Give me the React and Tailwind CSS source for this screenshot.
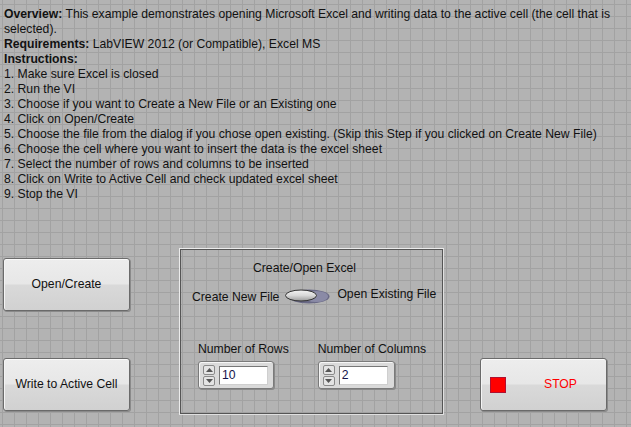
import React from "react";

const font = { fontFamily: "Tahoma, 'Liberation Sans', Arial, sans-serif" };

const PanelButton = ({ children, className = "" }) => (
  <div
    className={`h-[53px] rounded-[3px] border border-[#6a6a6a] bg-[linear-gradient(to_bottom,#ededed_0%,#e7e7e7_48%,#d9d9d9_52%,#d1d1d1_100%)] shadow-[inset_0_1px_0_#fafafa,inset_1px_0_0_#f4f4f4,1px_1px_0_#8a8a8a] flex items-center justify-center text-[12.2px] text-[#111] whitespace-nowrap ${className}`}
  >
    {children}
  </div>
);

const Spinner = () => (
  <div className="flex flex-col gap-[1px]">
    <div className="w-[12px] h-[10px] rounded-[2px] border border-[#8a8a8a] bg-[#e4e4e4] flex items-center justify-center">
      <svg width="7" height="4" viewBox="0 0 7 4">
        <path d="M0 4 L3.5 0 L7 4 Z" fill="#555" />
      </svg>
    </div>
    <div className="w-[12px] h-[10px] rounded-[2px] border border-[#8a8a8a] bg-[#e4e4e4] flex items-center justify-center">
      <svg width="7" height="4" viewBox="0 0 7 4">
        <path d="M0 0 L3.5 4 L7 0 Z" fill="#555" />
      </svg>
    </div>
  </div>
);

const NumericControl = ({ value, width }) => (
  <div
    className="h-[28px] rounded-[3px] border border-[#7a7a7a] bg-[#dadada] shadow-[inset_1px_1px_0_#f6f6f6,1px_1px_0_#8a8a8a] flex items-center gap-[4px] pl-[4px]"
    style={{ width }}
  >
    <Spinner />
    <div className="w-[49px] h-[19px] bg-white border border-[#777] border-r-[#cfcfcf] border-b-[#cfcfcf] flex items-center pl-[2px] text-[12.2px] text-[#14144a]">
      {value}
    </div>
  </div>
);

const Toggle = () => (
  <svg width="46" height="16" viewBox="0 0 46 16">
    <defs>
      <linearGradient id="knob" x1="0" y1="0" x2="0" y2="1">
        <stop offset="0" stopColor="#f4f4f4" />
        <stop offset="0.5" stopColor="#d8d8d8" />
        <stop offset="1" stopColor="#9a9a9a" />
      </linearGradient>
    </defs>
    <ellipse cx="25" cy="8.5" rx="20.5" ry="7" fill="#6a6a86" />
    <ellipse cx="32" cy="8.5" rx="12" ry="5.5" fill="#8a8aa6" />
    <ellipse cx="17" cy="7.5" rx="15.5" ry="5.5" fill="url(#knob)" stroke="#333" strokeWidth="1" />
  </svg>
);

export default function App() {
  return (
    <div
      className="w-[631px] h-[427px] overflow-hidden bg-[#b3b3b3] bg-[linear-gradient(to_right,#a2a2a2_1px,transparent_1px),linear-gradient(to_bottom,#a2a2a2_1px,transparent_1px)] bg-size-[12px_12px] bg-position-[2px_4px] text-[#111]"
      style={font}
    >
      <div className="h-[248px] pl-[4px] pt-[7px] text-[12.2px] leading-[15px] whitespace-nowrap">
        <p>
          <b>Overview:</b> This example demonstrates opening Microsoft Excel and writing data to the active cell (the cell that is
        </p>
        <p>selected).</p>
        <p>
          <b>Requirements:</b> LabVIEW 2012 (or Compatible), Excel MS
        </p>
        <p>
          <b>Instructions:</b>
        </p>
        <p>1. Make sure Excel is closed</p>
        <p>2. Run the VI</p>
        <p>3. Choose if you want to Create a New File or an Existing one</p>
        <p>4. Click on Open/Create</p>
        <p>5. Choose the file from the dialog if you chose open existing. (Skip this Step if you clicked on Create New File)</p>
        <p>6. Choose the cell where you want to insert the data is the excel sheet</p>
        <p>7. Select the number of rows and columns to be inserted</p>
        <p>8. Click on Write to Active Cell and check updated excel sheet</p>
        <p>9. Stop the VI</p>
      </div>

      <div className="flex items-start">
        <div className="ml-[3px] pt-[10px] w-[127px] flex flex-col gap-[47px]">
          <PanelButton>Open/Create</PanelButton>
          <PanelButton>Write to Active Cell</PanelButton>
        </div>

        <div className="ml-[49px] w-[265px] h-[167px] border border-[#ececec] border-r-[#e0e0e0] border-b-[#e0e0e0]">
          <div className="w-full h-full border border-[#555] text-[12.2px] whitespace-nowrap">
            <div className="pl-[72px] pt-[10px] leading-[16px]">Create/Open Excel</div>
            <div className="flex items-start h-[20px] mt-[12px] leading-[16px]">
              <span className="ml-[11px] mt-[1px]">Create New File</span>
              <div className="ml-[5px]">
                <Toggle />
              </div>
              <span className="ml-[7px] -mt-[2px]">Open Existing File</span>
            </div>
            <div className="flex mt-[33px]">
              <div className="ml-[17px] flex flex-col gap-[4px]">
                <span className="leading-[16px]">Number of Rows</span>
                <NumericControl value="10" width="76px" />
              </div>
              <div className="ml-[29px] flex flex-col gap-[4px]">
                <span className="leading-[16px]">Number of Columns</span>
                <NumericControl value="2" width="77px" />
              </div>
            </div>
          </div>
        </div>

        <div className="ml-[36px] mt-[110px] w-[127px]">
          <PanelButton className="justify-start">
            <div className="ml-[9px] w-[16px] h-[16px] bg-[#ff0000] border border-[#b01030]" />
            <span className="ml-[38px] text-[#ff0000]">STOP</span>
          </PanelButton>
        </div>
      </div>
    </div>
  );
}
